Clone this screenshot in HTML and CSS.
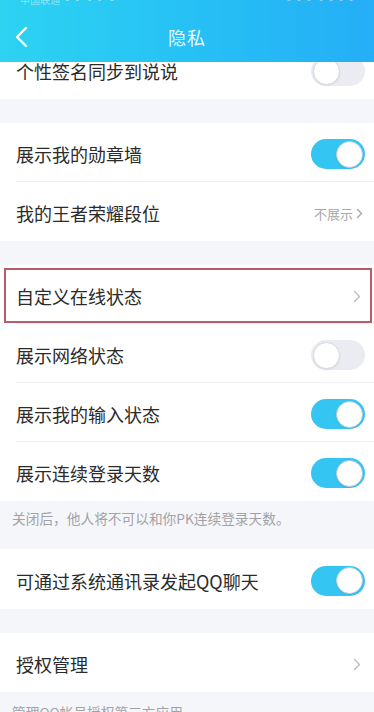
FILE: index.html
```html
<!DOCTYPE html>
<html lang="zh-CN">
<head>
<meta charset="utf-8">
<title>隐私</title>
<link rel="stylesheet" href="styles.css">
</head>
<body>
<header class="topbar">
  <div class="status">
    <span class="carrier">中国联通 ▪▪ ▪▪ ▪</span>
    <span class="clock">▪▪▪ ▪▪▪▪</span>
  </div>
  <div class="nav">
    <svg class="back" width="14" height="22" viewBox="0 0 14 22"><polyline points="11,2 2,11 11,20" fill="none" stroke="#fff" stroke-width="2.4" stroke-linecap="round" stroke-linejoin="round"/></svg>
    <div class="title">隐私</div>
  </div>
</header>

<main class="page">
  <section class="group">
    <div class="row"><span class="label">个性签名同步到说说</span><span class="switch off"><span class="knob"></span></span></div>
  </section>

  <section class="group">
    <div class="row line"><span class="label">展示我的勋章墙</span><span class="switch on"><span class="knob"></span></span></div>
    <div class="row"><span class="label">我的王者荣耀段位</span><span class="value">不展示<svg class="chev small" width="7" height="11" viewBox="0 0 7 11"><polyline points="1.5,1.5 5.5,5.5 1.5,9.5" fill="none" stroke="#a8a8a8" stroke-width="1.4" stroke-linecap="round" stroke-linejoin="round"/></svg></span></div>
  </section>

  <section class="group flush">
    <div class="row line marked"><span class="label">自定义在线状态</span><svg class="chev" width="8" height="13" viewBox="0 0 8 13"><polyline points="1.5,1.5 6.5,6.5 1.5,11.5" fill="none" stroke="#bcbcbc" stroke-width="1.3" stroke-linecap="round" stroke-linejoin="round"/></svg></div>
    <div class="row line"><span class="label">展示网络状态</span><span class="switch off"><span class="knob"></span></span></div>
    <div class="row line"><span class="label">展示我的输入状态</span><span class="switch on"><span class="knob"></span></span></div>
    <div class="row"><span class="label">展示连续登录天数</span><span class="switch on"><span class="knob"></span></span></div>
  </section>
  <p class="note">关闭后，他人将不可以和你PK连续登录天数。</p>

  <section class="group">
    <div class="row tall"><span class="label">可通过系统通讯录发起QQ聊天</span><span class="switch on"><span class="knob"></span></span></div>
  </section>

  <section class="group flush">
    <div class="row"><span class="label">授权管理</span><svg class="chev" width="8" height="13" viewBox="0 0 8 13"><polyline points="1.5,1.5 6.5,6.5 1.5,11.5" fill="none" stroke="#bcbcbc" stroke-width="1.3" stroke-linecap="round" stroke-linejoin="round"/></svg></div>
  </section>
  <p class="note second">管理QQ帐号授权第三方应用</p>
</main>
</body>
</html>
```

FILE: styles.css
```css
* { box-sizing: border-box; }
html, body {
  margin: 0;
  padding: 0;
}
body {
  width: 374px;
  height: 712px;
  overflow: hidden;
  background: #f5f6fa;
  font-family: "Noto Sans CJK SC", "Noto Sans", sans-serif;
  color: #2b2b2b;
}

.topbar {
  position: fixed;
  top: 0;
  left: 0;
  right: 0;
  height: 62px;
  z-index: 5;
  background: linear-gradient(90deg, #2dd3f1 0%, #27c3f5 45%, #24aef6 100%);
  color: #fff;
}
.status {
  height: 8px;
  overflow: hidden;
  display: flex;
  justify-content: space-between;
  padding: 0 18px 0 20px;
  font-size: 10px;
  line-height: 10px;
  color: rgba(255,255,255,0.45);
}
.status span { margin-top: -5px; }
.nav {
  height: 54px;
  display: flex;
  align-items: center;
  justify-content: center;
  position: relative;
}
.back {
  position: absolute;
  left: 15px;
  top: 18px;
}
.title {
  font-size: 18px;
  letter-spacing: 1px;
  margin-top: 4px;
  color: rgba(255,255,255,0.92);
}

.page {
  padding-top: 40px;
}
.group {
  background: #fff;
  margin-bottom: 24px;
}
.group.flush {
  margin-bottom: 0;
}
.row {
  height: 59px;
  padding: 3px 9px 0 16px;
  display: flex;
  align-items: center;
  justify-content: space-between;
  position: relative;
}
.row.tall { height: 60px; }
.row.line::before {
  content: "";
  position: absolute;
  left: 16px;
  right: 0;
  bottom: 0;
  height: 1px;
  background: #eeeff2;
}
.label {
  font-size: 18px;
  line-height: 24px;
  color: #2b2b2b;
}
.value {
  font-size: 13px;
  color: #a8a8a8;
  display: flex;
  align-items: center;
  gap: 3px;
  margin-right: 2px;
}
.chev { margin-right: 4px; }
.chev.small { margin-right: 0; }

.marked::after {
  content: "";
  position: absolute;
  left: 4px;
  right: 2px;
  top: 3px;
  bottom: 1px;
  border: 2px solid #b65d69;
  pointer-events: none;
}

.switch {
  width: 54px;
  height: 30px;
  border-radius: 15px;
  display: flex;
  align-items: center;
  padding: 2px;
  flex: none;
}
.switch.on {
  background: #35c5f3;
  justify-content: flex-end;
}
.switch.off {
  background: #eaecf2;
  justify-content: flex-start;
}
.knob {
  width: 27px;
  height: 27px;
  border-radius: 50%;
  background: #fff;
  border: 1px solid #d3dbe0;
  box-shadow: 0 1px 2px rgba(0,0,0,0.08);
}
.switch.on .knob { border-color: #b7cbd4; }

.note {
  margin: 0;
  height: 48px;
  padding: 7px 12px 0;
  font-size: 13.7px;
  line-height: 20px;
  color: #a2a2a6;
}
.note.second {
  padding-top: 10px;
}
```
